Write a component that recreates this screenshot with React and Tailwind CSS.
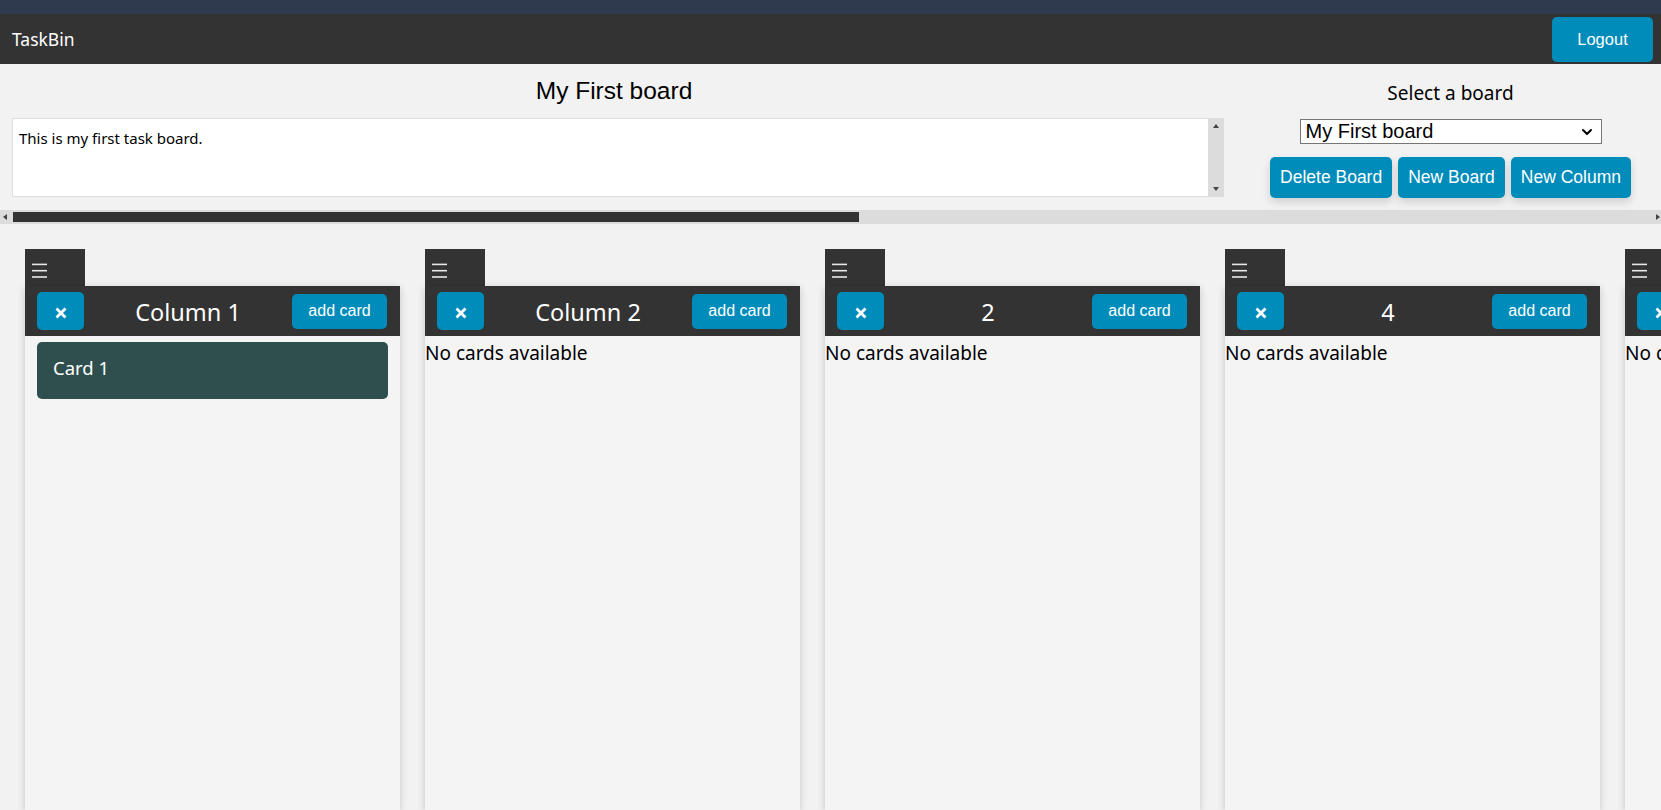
import { ChevronDown } from "lucide-react";

const columns = [
  { id: 1, title: "Column 1", cards: ["Card 1"] },
  { id: 2, title: "Column 2", cards: [] },
  { id: 3, title: "2", cards: [] },
  { id: 4, title: "4", cards: [] },
  { id: 5, title: "5", cards: [] },
];

function Column({ column }) {
  return (
    <div className="flex w-[375px] shrink-0 flex-col">
      {/* drag tab */}
      <div className="h-[37px] w-[60px] bg-[#333] pl-[7px] pt-[14px]">
        <svg width="15" height="15" viewBox="0 0 15 15">
          <rect x="0" y="0.6" width="15" height="1.6" fill="#e8e8e8" />
          <rect x="0" y="6.9" width="15" height="1.6" fill="#e8e8e8" />
          <rect x="0" y="13.2" width="15" height="1.6" fill="#e8e8e8" />
        </svg>
      </div>

      <div className="flex-1 bg-[#f4f4f4] shadow-[0_2px_8px_rgba(0,0,0,0.18)]">
        {/* header */}
        <div className="flex h-[50px] items-center justify-between bg-[#333] pl-[12px] pr-[13px]">
          <button className="flex h-[38px] w-[47px] items-center justify-center rounded-[5px] bg-[#008cba] pt-[4px]">
            <svg width="12" height="12" viewBox="0 0 12 12">
              <path d="M1.5 1.5 L10.5 10.5 M10.5 1.5 L1.5 10.5" stroke="#fff" strokeWidth="2.8" />
            </svg>
          </button>
          <span className="pt-[2px] text-[23.5px] leading-[30px] text-white">{column.title}</span>
          <button className="h-[35px] w-[95px] rounded-[5px] bg-[#008cba] font-['Liberation_Sans',Arial,sans-serif] text-[16px] text-white">
            add card
          </button>
        </div>

        {column.cards.length === 0 ? (
          <div className="pt-[4px] text-[19px] leading-[27px] text-black">No cards available</div>
        ) : (
          column.cards.map((card) => (
            <div
              key={card}
              className="mx-[12px] mt-[6px] flex h-[57px] items-center rounded-[5px] bg-[#2f4f4f] px-[16px] pb-[6px] text-[18.5px] text-white"
            >
              {card}
            </div>
          ))
        )}
      </div>
    </div>
  );
}

export default function App() {
  return (
    <div className="flex h-screen flex-col overflow-hidden bg-[#f2f2f2] font-['Noto_Sans',sans-serif]">
      {/* TOP STRIP */}
      <div className="h-[14px] shrink-0 bg-[#2f3a4e]"></div>

      {/* NAVBAR */}
      <nav className="flex h-[50px] shrink-0 items-center justify-between bg-[#333] pl-[12px] pr-[8px]">
        <span className="text-[17.5px] text-white">TaskBin</span>
        <button className="h-[45px] w-[101px] rounded-[5px] bg-[#008cba] font-['Liberation_Sans',Arial,sans-serif] text-[16.5px] text-white">
          Logout
        </button>
      </nav>

      {/* BOARD HEADER */}
      <div className="flex shrink-0 pl-[12px]">
        <div className="flex flex-1 flex-col items-center pb-[13px] pt-[13px]">
          <h1 className="mr-[8px] font-['Liberation_Sans',Arial,sans-serif] text-[24.5px] leading-[28px] text-black">
            My First board
          </h1>
          <div className="mt-[13px] flex h-[79px] w-full border border-[#dddddd] bg-white">
            <textarea
              readOnly
              defaultValue="This is my first task board."
              className="flex-1 resize-none overflow-hidden px-[6px] pt-[8px] text-[15px] leading-[22px] text-black outline-none"
            />
            <div className="-my-px -mr-px flex w-[16px] flex-col items-center justify-between bg-[#dcdcdc] py-[6px]">
              <span className="h-0 w-0 border-x-[3.5px] border-b-[4px] border-x-transparent border-b-[#444]"></span>
              <span className="h-0 w-0 border-x-[3.5px] border-t-[4px] border-x-transparent border-t-[#444]"></span>
            </div>
          </div>
        </div>

        <div className="ml-[16px] flex w-[421px] flex-col items-center pt-[16px]">
          <span className="text-[19px] leading-[26px] text-black">Select a board</span>
          <div className="relative mt-[13px]">
            <select className="h-[25px] w-[302px] appearance-none border border-[#767676] bg-white pl-[5px] font-['Liberation_Sans',Arial,sans-serif] text-[20px] leading-[23px] text-black outline-none">
              <option>My First board</option>
            </select>
            <ChevronDown
              size={16}
              strokeWidth={3}
              className="pointer-events-none absolute right-[7px] top-[5px] text-black"
            />
          </div>
          <div className="mt-[13px] flex gap-[6px]">
            <button className="h-[41px] rounded-[5px] bg-[#008cba] px-[10px] font-['Liberation_Sans',Arial,sans-serif] text-[17.5px] text-white shadow-[0_4px_8px_rgba(0,0,0,0.15)]">
              Delete Board
            </button>
            <button className="h-[41px] rounded-[5px] bg-[#008cba] px-[10px] font-['Liberation_Sans',Arial,sans-serif] text-[17.5px] text-white shadow-[0_4px_8px_rgba(0,0,0,0.15)]">
              New Board
            </button>
            <button className="h-[41px] rounded-[5px] bg-[#008cba] px-[10px] font-['Liberation_Sans',Arial,sans-serif] text-[17.5px] text-white shadow-[0_4px_8px_rgba(0,0,0,0.15)]">
              New Column
            </button>
          </div>
        </div>
      </div>

      {/* HORIZONTAL SCROLLBAR */}
      <div className="flex h-[14px] shrink-0 items-center bg-[#dcdcdc]">
        <span className="ml-[3px] h-0 w-0 border-y-[3.5px] border-r-[4px] border-y-transparent border-r-[#444]"></span>
        <div className="ml-[6px] h-[10px] w-[846px] bg-[#333]"></div>
        <div className="flex-1"></div>
        <span className="mr-[1px] h-0 w-0 border-y-[3.5px] border-l-[4px] border-y-transparent border-l-[#444]"></span>
      </div>

      {/* COLUMNS */}
      <div className="flex min-h-0 flex-1 gap-[25px] overflow-hidden pl-[25px] pt-[25px]">
        {columns.map((column) => (
          <Column key={column.id} column={column} />
        ))}
      </div>
    </div>
  );
}
